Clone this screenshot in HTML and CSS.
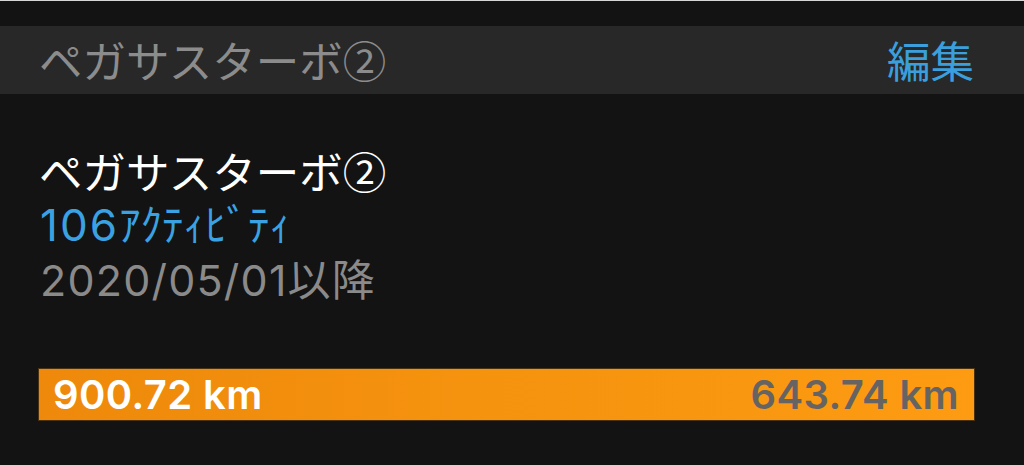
FILE: index.html
```html
<!DOCTYPE html>
<html lang="ja">
<head>
<meta charset="utf-8">
<link rel="stylesheet" href="styles.css">
</head>
<body>
<div class="topline"></div>
<div class="status"></div>
<header class="navbar">
  <div class="nav-title">ペガサスターボ②</div>
  <div class="nav-edit">編集</div>
</header>
<main class="content">
  <div class="name">ペガサスターボ②</div>
  <div class="count"><span class="num">106</span>ｱｸﾃｨﾋﾞﾃｨ</div>
  <div class="since">2020/05/01以降</div>
  <div class="bar">
    <span class="bar-left">900.72 km</span>
    <span class="bar-right">643.74 km</span>
  </div>
</main>
</body>
</html>
```
FILE: styles.css
```css
html, body {
  margin: 0;
  padding: 0;
  background: #131313;
  width: 1024px;
  height: 465px;
  overflow: hidden;
}
body {
  font-family: Inter, "Noto Sans CJK JP", sans-serif;
}
.topline {
  height: 1px;
  background: #d6d6d6;
}
.status {
  height: 25px;
  background: #131313;
}
.navbar {
  height: 68px;
  background: #282828;
  display: flex;
  align-items: center;
  justify-content: space-between;
  padding: 0 50px 0 39px;
  font-family: "Noto Sans CJK JP", sans-serif;
  font-size: 43.5px;
}
.nav-title {
  color: #8c8c8c;
  line-height: 1;
}
.nav-edit {
  color: #3a9fdc;
  line-height: 1;
}
.content {
  padding: 49px 49px 0 38px;
  display: flex;
  flex-direction: column;
}
.name, .count, .since {
  font-size: 43px;
  line-height: 55px;
  height: 55px;
  padding-left: 2px;
}
.name {
  color: #ffffff;
  font-family: "Noto Sans CJK JP", sans-serif;
  font-size: 43.5px;
  padding-left: 1px;
}
.count {
  color: #3aa2e2;
}
.count .num {
  font-size: 44px;
  letter-spacing: 2px;
}
.since {
  color: #8a8a8a;
  letter-spacing: 1.2px;
}
.bar {
  margin-top: 60px;
  height: 51px;
  border: 1px solid #4a3210;
  background: linear-gradient(90deg, #ee890b 0%, #f5920e 45%, #fd9b12 100%);
  display: flex;
  align-items: center;
  justify-content: space-between;
  padding: 0 15px 0 14px;
  font-weight: 600;
  font-size: 40px;
  letter-spacing: 0.4px;
}
.bar-left {
  color: #ffffff;
}
.bar-right {
  color: #666462;
}
```
